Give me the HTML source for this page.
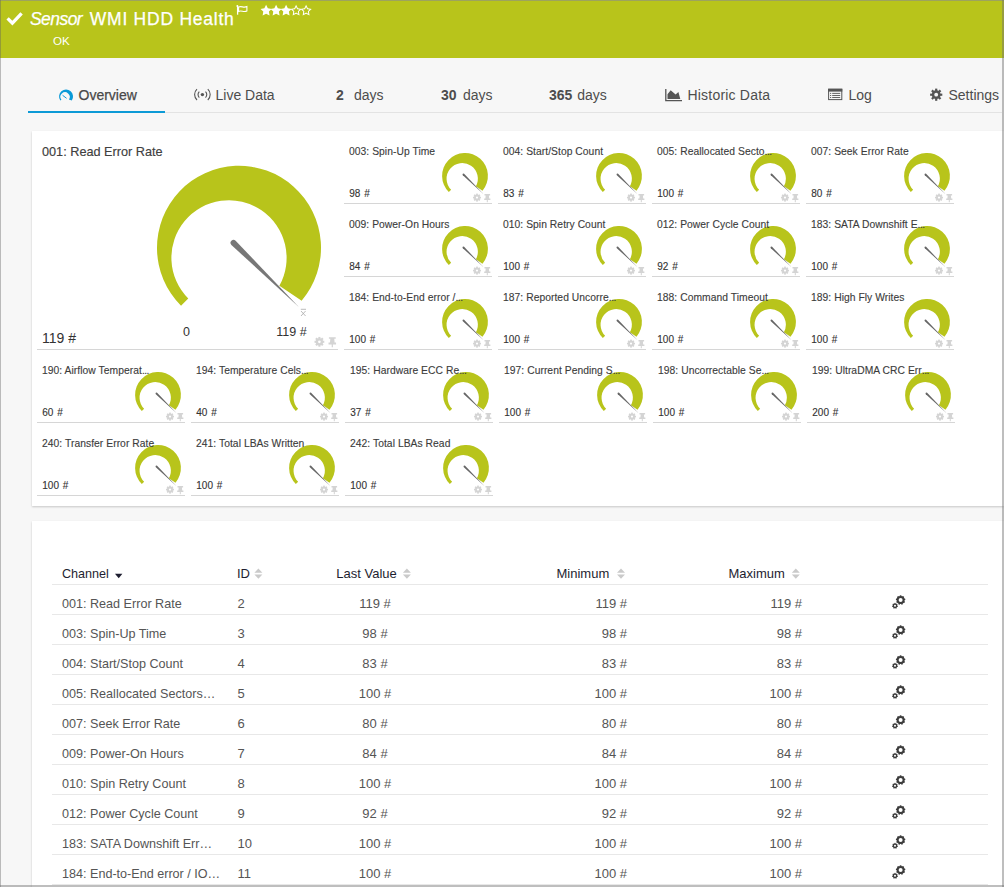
<!DOCTYPE html>
<html><head><meta charset="utf-8">
<style>
*{margin:0;padding:0;box-sizing:border-box}
html,body{width:1004px;height:887px;overflow:hidden}
body{background:#f7f7f7;font-family:"Liberation Sans",sans-serif;position:relative;color:#4a4a4a}
.a{position:absolute;white-space:nowrap}
#hdr{position:absolute;left:0;top:0;width:1004px;height:58px;background:#b8c41b;border-top:1px solid #9da35e}
.panel{position:absolute;background:#fff;box-shadow:0 1px 2px rgba(0,0,0,.2)}
.ln{position:absolute;height:1px;background:#d6d6d6}
.rl{position:absolute;left:52px;width:936px;height:1px;background:#e8e8e8}
svg{position:absolute;left:0;top:0;overflow:visible}
</style></head><body>
<div id="hdr"></div>

<svg width="1004" height="60"><path d="M7.6,18.4 L12.4,23.2 L21.6,13.4" fill="none" stroke="#fff" stroke-width="3.3" stroke-linecap="butt"/></svg>
<div class="a" style="left:30px;top:8.44px;font-size:17.5px;line-height:23px;color:#fff;letter-spacing:-0.55px;-webkit-text-stroke:0.25px #fff"><i>Sensor</i></div>
<div class="a" style="left:89.8px;top:8.44px;font-size:17.5px;line-height:23px;color:#fff;letter-spacing:0.75px;-webkit-text-stroke:0.25px #fff">WMI HDD Health</div>
<div class="a" style="left:53px;top:33.48px;font-size:11.6px;line-height:15px;color:#fff">OK</div>
<svg width="1004" height="60"><path d="M237.6,14.7 V5.6" stroke="#fff" stroke-width="1.3"/><circle cx="237.3" cy="5.9" r="0.9" fill="#fff"/><path d="M238.6,7 C241.5,5.6 243.5,8.2 246.9,6.6 V11 C243.5,12.6 241.5,10 238.6,11.4 Z" fill="none" stroke="#fff" stroke-width="1.1"/></svg>
<svg width="1004" height="60"><polygon points="266.10,4.80 267.83,8.31 271.71,8.88 268.91,11.61 269.57,15.47 266.10,13.65 262.63,15.47 263.29,11.61 260.49,8.88 264.37,8.31" fill="#fff"/><polygon points="276.10,4.80 277.83,8.31 281.71,8.88 278.91,11.61 279.57,15.47 276.10,13.65 272.63,15.47 273.29,11.61 270.49,8.88 274.37,8.31" fill="#fff"/><polygon points="286.10,4.80 287.83,8.31 291.71,8.88 288.91,11.61 289.57,15.47 286.10,13.65 282.63,15.47 283.29,11.61 280.49,8.88 284.37,8.31" fill="#fff"/><path d="M296.10,4.80 L297.83,8.31 L301.71,8.88 L298.91,11.61 L299.57,15.47 L296.10,13.65 L292.63,15.47 L293.29,11.61 L290.49,8.88 L294.37,8.31 Z M296.10,7.00 L297.19,9.20 L299.62,9.56 L297.86,11.27 L298.27,13.69 L296.10,12.55 L293.93,13.69 L294.34,11.27 L292.58,9.56 L295.01,9.20 Z" fill="#fff" fill-rule="evenodd"/><path d="M306.10,4.80 L307.83,8.31 L311.71,8.88 L308.91,11.61 L309.57,15.47 L306.10,13.65 L302.63,15.47 L303.29,11.61 L300.49,8.88 L304.37,8.31 Z M306.10,7.00 L307.19,9.20 L309.62,9.56 L307.86,11.27 L308.27,13.69 L306.10,12.55 L303.93,13.69 L304.34,11.27 L302.58,9.56 L305.01,9.20 Z" fill="#fff" fill-rule="evenodd"/></svg>
<div class="a" style="left:28px;top:111px;width:137px;height:2px;background:#0d9ad6"></div>
<div class="a" style="left:165px;top:112px;width:837px;height:1px;background:#e3e3e3"></div>
<svg width="1004" height="120"><path d="M60.3,100.5 A7,7 0 1 1 71.8,100.5 L68.9,99.6 A4.65,4.65 0 1 0 61.4,99.8 Z" fill="#0a9ad8"/><path d="M62.6,95.3 L66.6,98.3" stroke="#0a9ad8" stroke-width="1.0"/></svg>
<div class="a" style="left:78.5px;top:86.15px;font-size:14px;line-height:18px;color:#484848;-webkit-text-stroke:0.25px #484848">Overview</div>
<svg width="1004" height="120" fill="none" stroke="#555" stroke-width="1.1"><circle cx="202.4" cy="94.6" r="1.7" fill="#555" stroke="none"/><path d="M199.3,91.6 A4.2,4.2 0 0 0 199.3,97.6"/><path d="M205.5,91.6 A4.2,4.2 0 0 1 205.5,97.6"/><path d="M197,89.2 A7.3,7.3 0 0 0 197,100"/><path d="M207.8,89.2 A7.3,7.3 0 0 1 207.8,100"/></svg>
<div class="a" style="left:215.5px;top:86.15px;font-size:14px;line-height:18px;color:#4d4d4d">Live Data</div>
<div class="a" style="left:336px;top:86.15px;font-size:14px;line-height:18px;color:#4d4d4d"><b>2</b></div>
<div class="a" style="left:354px;top:86.15px;font-size:14px;line-height:18px;color:#4d4d4d">days</div>
<div class="a" style="left:441px;top:86.15px;font-size:14px;line-height:18px;color:#4d4d4d"><b>30</b></div>
<div class="a" style="left:463px;top:86.15px;font-size:14px;line-height:18px;color:#4d4d4d">days</div>
<div class="a" style="left:549px;top:86.15px;font-size:14px;line-height:18px;color:#4d4d4d"><b>365</b></div>
<div class="a" style="left:577.3px;top:86.15px;font-size:14px;line-height:18px;color:#4d4d4d">days</div>
<svg width="1004" height="120"><path d="M665.8,89 V100.6 H682" fill="none" stroke="#555" stroke-width="1.3"/><path d="M667.5,98.9 V94.2 L670.7,90.2 L675.6,94.6 L678.4,91.9 L680.3,98.9 Z" fill="#555"/></svg>
<div class="a" style="left:687.5px;top:86.15px;font-size:14px;line-height:18px;color:#4d4d4d;letter-spacing:0.2px">Historic Data</div>
<svg width="1004" height="120"><rect x="828.6" y="89.2" width="13.2" height="10.4" fill="none" stroke="#555" stroke-width="1"/><rect x="828.1" y="88.8" width="14.2" height="2.8" fill="#555"/><path d="M830,93.4 H831.2 M832.2,93.4 H840.2 M830,95.5 H831.2 M832.2,95.5 H840.2 M830,97.5 H831.2 M832.2,97.5 H840.2" stroke="#555" stroke-width="0.9"/></svg>
<div class="a" style="left:848.5px;top:86.15px;font-size:14px;line-height:18px;color:#4d4d4d">Log</div>
<svg width="1004" height="120"><circle cx="936.2" cy="94.7" r="4.4" fill="#555"/><rect x="935.10" y="88.60" width="2.20" height="6.10" fill="#555" transform="rotate(0.0 936.2 94.7)"/><rect x="935.10" y="88.60" width="2.20" height="6.10" fill="#555" transform="rotate(45.0 936.2 94.7)"/><rect x="935.10" y="88.60" width="2.20" height="6.10" fill="#555" transform="rotate(90.0 936.2 94.7)"/><rect x="935.10" y="88.60" width="2.20" height="6.10" fill="#555" transform="rotate(135.0 936.2 94.7)"/><rect x="935.10" y="88.60" width="2.20" height="6.10" fill="#555" transform="rotate(180.0 936.2 94.7)"/><rect x="935.10" y="88.60" width="2.20" height="6.10" fill="#555" transform="rotate(225.0 936.2 94.7)"/><rect x="935.10" y="88.60" width="2.20" height="6.10" fill="#555" transform="rotate(270.0 936.2 94.7)"/><rect x="935.10" y="88.60" width="2.20" height="6.10" fill="#555" transform="rotate(315.0 936.2 94.7)"/><circle cx="936.2" cy="94.7" r="1.9" fill="#f6f6f6"/></svg>
<div class="a" style="left:948.5px;top:86.15px;font-size:14px;line-height:18px;color:#4d4d4d">Settings</div>
<div class="panel" style="left:32px;top:131px;width:972px;height:375px"></div>
<div class="a" style="left:42px;top:143.70px;font-size:12.7px;line-height:17px;color:#404040;-webkit-text-stroke:0.15px #404040">001: Read Error Rate</div>
<svg width="1004" height="887"><path d="M181.02,305.78 A82.00,82.00 0 1 1 301.63,300.73 L279.38,285.73 A57.60,57.60 0 1 0 188.27,298.53 Z" fill="#b8c41b"/><path d="M231.40,244.94 L298.80,307.00 L235.60,240.66 A3.00,3.00 0 0 0 231.40,244.94 Z" fill="#777"/></svg>
<div class="a" style="left:42px;top:329.15px;font-size:14px;line-height:18px;color:#333">119 #</div>
<div class="a" style="left:183px;top:323.67px;font-size:12.5px;line-height:16px;color:#333">0</div>
<div class="a" style="left:276.3px;top:323.67px;font-size:12.5px;line-height:16px;color:#333">119 #</div>
<svg width="1004" height="887"><path d="M300.8,309.3 H306" stroke="#aaa" stroke-width="0.8"/><path d="M301,311 L305.6,316 M305.6,311 L301,316" stroke="#aaa" stroke-width="0.8"/></svg>
<div class="ln" style="left:37px;top:349px;width:301px"></div>
<svg width="1004" height="887"><circle cx="319.4" cy="341.8" r="3.66" fill="#d4d4d4"/><rect x="318.36" y="336.92" width="2.07" height="4.88" fill="#d4d4d4" transform="rotate(0.0 319.4 341.8)"/><rect x="318.36" y="336.92" width="2.07" height="4.88" fill="#d4d4d4" transform="rotate(45.0 319.4 341.8)"/><rect x="318.36" y="336.92" width="2.07" height="4.88" fill="#d4d4d4" transform="rotate(90.0 319.4 341.8)"/><rect x="318.36" y="336.92" width="2.07" height="4.88" fill="#d4d4d4" transform="rotate(135.0 319.4 341.8)"/><rect x="318.36" y="336.92" width="2.07" height="4.88" fill="#d4d4d4" transform="rotate(180.0 319.4 341.8)"/><rect x="318.36" y="336.92" width="2.07" height="4.88" fill="#d4d4d4" transform="rotate(225.0 319.4 341.8)"/><rect x="318.36" y="336.92" width="2.07" height="4.88" fill="#d4d4d4" transform="rotate(270.0 319.4 341.8)"/><rect x="318.36" y="336.92" width="2.07" height="4.88" fill="#d4d4d4" transform="rotate(315.0 319.4 341.8)"/><circle cx="319.4" cy="341.8" r="1.342" fill="#fff"/><polygon points="328.88,337.20 335.72,337.20 335.72,338.79 334.25,338.79 334.62,342.45 336.08,342.45 336.08,344.40 332.91,344.40 332.91,347.20 331.69,347.20 331.69,344.40 328.52,344.40 328.52,342.45 329.98,342.45 330.35,338.79 328.88,338.79" fill="#d4d4d4"/><path d="M448.81,192.09 A22.90,22.90 0 1 1 482.49,190.68 L475.89,186.27 A15.64,15.64 0 1 0 451.15,189.75 Z" fill="#b8c41b"/><path d="M462.83,175.15 L483.37,194.09 L464.10,173.86 A0.90,0.90 0 0 0 462.83,175.15 Z" fill="#666"/><circle cx="477" cy="197.6" r="3.0" fill="#d4d4d4"/><rect x="476.15" y="193.60" width="1.70" height="4.00" fill="#d4d4d4" transform="rotate(0.0 477 197.6)"/><rect x="476.15" y="193.60" width="1.70" height="4.00" fill="#d4d4d4" transform="rotate(45.0 477 197.6)"/><rect x="476.15" y="193.60" width="1.70" height="4.00" fill="#d4d4d4" transform="rotate(90.0 477 197.6)"/><rect x="476.15" y="193.60" width="1.70" height="4.00" fill="#d4d4d4" transform="rotate(135.0 477 197.6)"/><rect x="476.15" y="193.60" width="1.70" height="4.00" fill="#d4d4d4" transform="rotate(180.0 477 197.6)"/><rect x="476.15" y="193.60" width="1.70" height="4.00" fill="#d4d4d4" transform="rotate(225.0 477 197.6)"/><rect x="476.15" y="193.60" width="1.70" height="4.00" fill="#d4d4d4" transform="rotate(270.0 477 197.6)"/><rect x="476.15" y="193.60" width="1.70" height="4.00" fill="#d4d4d4" transform="rotate(315.0 477 197.6)"/><circle cx="477" cy="197.6" r="1.1" fill="#fff"/><polygon points="484.50,194.10 490.10,194.10 490.10,195.40 488.90,195.40 489.20,198.40 490.40,198.40 490.40,200.00 487.80,200.00 487.80,202.30 486.80,202.30 486.80,200.00 484.20,200.00 484.20,198.40 485.40,198.40 485.70,195.40 484.50,195.40" fill="#d4d4d4"/><path d="M602.81,192.09 A22.90,22.90 0 1 1 636.49,190.68 L629.89,186.27 A15.64,15.64 0 1 0 605.15,189.75 Z" fill="#b8c41b"/><path d="M616.83,175.15 L637.37,194.09 L618.10,173.86 A0.90,0.90 0 0 0 616.83,175.15 Z" fill="#666"/><circle cx="631" cy="197.6" r="3.0" fill="#d4d4d4"/><rect x="630.15" y="193.60" width="1.70" height="4.00" fill="#d4d4d4" transform="rotate(0.0 631 197.6)"/><rect x="630.15" y="193.60" width="1.70" height="4.00" fill="#d4d4d4" transform="rotate(45.0 631 197.6)"/><rect x="630.15" y="193.60" width="1.70" height="4.00" fill="#d4d4d4" transform="rotate(90.0 631 197.6)"/><rect x="630.15" y="193.60" width="1.70" height="4.00" fill="#d4d4d4" transform="rotate(135.0 631 197.6)"/><rect x="630.15" y="193.60" width="1.70" height="4.00" fill="#d4d4d4" transform="rotate(180.0 631 197.6)"/><rect x="630.15" y="193.60" width="1.70" height="4.00" fill="#d4d4d4" transform="rotate(225.0 631 197.6)"/><rect x="630.15" y="193.60" width="1.70" height="4.00" fill="#d4d4d4" transform="rotate(270.0 631 197.6)"/><rect x="630.15" y="193.60" width="1.70" height="4.00" fill="#d4d4d4" transform="rotate(315.0 631 197.6)"/><circle cx="631" cy="197.6" r="1.1" fill="#fff"/><polygon points="638.50,194.10 644.10,194.10 644.10,195.40 642.90,195.40 643.20,198.40 644.40,198.40 644.40,200.00 641.80,200.00 641.80,202.30 640.80,202.30 640.80,200.00 638.20,200.00 638.20,198.40 639.40,198.40 639.70,195.40 638.50,195.40" fill="#d4d4d4"/><path d="M756.81,192.09 A22.90,22.90 0 1 1 790.49,190.68 L783.89,186.27 A15.64,15.64 0 1 0 759.15,189.75 Z" fill="#b8c41b"/><path d="M770.83,175.15 L791.37,194.09 L772.10,173.86 A0.90,0.90 0 0 0 770.83,175.15 Z" fill="#666"/><circle cx="785" cy="197.6" r="3.0" fill="#d4d4d4"/><rect x="784.15" y="193.60" width="1.70" height="4.00" fill="#d4d4d4" transform="rotate(0.0 785 197.6)"/><rect x="784.15" y="193.60" width="1.70" height="4.00" fill="#d4d4d4" transform="rotate(45.0 785 197.6)"/><rect x="784.15" y="193.60" width="1.70" height="4.00" fill="#d4d4d4" transform="rotate(90.0 785 197.6)"/><rect x="784.15" y="193.60" width="1.70" height="4.00" fill="#d4d4d4" transform="rotate(135.0 785 197.6)"/><rect x="784.15" y="193.60" width="1.70" height="4.00" fill="#d4d4d4" transform="rotate(180.0 785 197.6)"/><rect x="784.15" y="193.60" width="1.70" height="4.00" fill="#d4d4d4" transform="rotate(225.0 785 197.6)"/><rect x="784.15" y="193.60" width="1.70" height="4.00" fill="#d4d4d4" transform="rotate(270.0 785 197.6)"/><rect x="784.15" y="193.60" width="1.70" height="4.00" fill="#d4d4d4" transform="rotate(315.0 785 197.6)"/><circle cx="785" cy="197.6" r="1.1" fill="#fff"/><polygon points="792.50,194.10 798.10,194.10 798.10,195.40 796.90,195.40 797.20,198.40 798.40,198.40 798.40,200.00 795.80,200.00 795.80,202.30 794.80,202.30 794.80,200.00 792.20,200.00 792.20,198.40 793.40,198.40 793.70,195.40 792.50,195.40" fill="#d4d4d4"/><path d="M910.81,192.09 A22.90,22.90 0 1 1 944.49,190.68 L937.89,186.27 A15.64,15.64 0 1 0 913.15,189.75 Z" fill="#b8c41b"/><path d="M924.83,175.15 L945.37,194.09 L926.10,173.86 A0.90,0.90 0 0 0 924.83,175.15 Z" fill="#666"/><circle cx="939" cy="197.6" r="3.0" fill="#d4d4d4"/><rect x="938.15" y="193.60" width="1.70" height="4.00" fill="#d4d4d4" transform="rotate(0.0 939 197.6)"/><rect x="938.15" y="193.60" width="1.70" height="4.00" fill="#d4d4d4" transform="rotate(45.0 939 197.6)"/><rect x="938.15" y="193.60" width="1.70" height="4.00" fill="#d4d4d4" transform="rotate(90.0 939 197.6)"/><rect x="938.15" y="193.60" width="1.70" height="4.00" fill="#d4d4d4" transform="rotate(135.0 939 197.6)"/><rect x="938.15" y="193.60" width="1.70" height="4.00" fill="#d4d4d4" transform="rotate(180.0 939 197.6)"/><rect x="938.15" y="193.60" width="1.70" height="4.00" fill="#d4d4d4" transform="rotate(225.0 939 197.6)"/><rect x="938.15" y="193.60" width="1.70" height="4.00" fill="#d4d4d4" transform="rotate(270.0 939 197.6)"/><rect x="938.15" y="193.60" width="1.70" height="4.00" fill="#d4d4d4" transform="rotate(315.0 939 197.6)"/><circle cx="939" cy="197.6" r="1.1" fill="#fff"/><polygon points="946.50,194.10 952.10,194.10 952.10,195.40 950.90,195.40 951.20,198.40 952.40,198.40 952.40,200.00 949.80,200.00 949.80,202.30 948.80,202.30 948.80,200.00 946.20,200.00 946.20,198.40 947.40,198.40 947.70,195.40 946.50,195.40" fill="#d4d4d4"/><path d="M448.81,265.09 A22.90,22.90 0 1 1 482.49,263.68 L475.89,259.27 A15.64,15.64 0 1 0 451.15,262.75 Z" fill="#b8c41b"/><path d="M462.83,248.15 L483.37,267.09 L464.10,246.86 A0.90,0.90 0 0 0 462.83,248.15 Z" fill="#666"/><circle cx="477" cy="270.6" r="3.0" fill="#d4d4d4"/><rect x="476.15" y="266.60" width="1.70" height="4.00" fill="#d4d4d4" transform="rotate(0.0 477 270.6)"/><rect x="476.15" y="266.60" width="1.70" height="4.00" fill="#d4d4d4" transform="rotate(45.0 477 270.6)"/><rect x="476.15" y="266.60" width="1.70" height="4.00" fill="#d4d4d4" transform="rotate(90.0 477 270.6)"/><rect x="476.15" y="266.60" width="1.70" height="4.00" fill="#d4d4d4" transform="rotate(135.0 477 270.6)"/><rect x="476.15" y="266.60" width="1.70" height="4.00" fill="#d4d4d4" transform="rotate(180.0 477 270.6)"/><rect x="476.15" y="266.60" width="1.70" height="4.00" fill="#d4d4d4" transform="rotate(225.0 477 270.6)"/><rect x="476.15" y="266.60" width="1.70" height="4.00" fill="#d4d4d4" transform="rotate(270.0 477 270.6)"/><rect x="476.15" y="266.60" width="1.70" height="4.00" fill="#d4d4d4" transform="rotate(315.0 477 270.6)"/><circle cx="477" cy="270.6" r="1.1" fill="#fff"/><polygon points="484.50,267.10 490.10,267.10 490.10,268.40 488.90,268.40 489.20,271.40 490.40,271.40 490.40,273.00 487.80,273.00 487.80,275.30 486.80,275.30 486.80,273.00 484.20,273.00 484.20,271.40 485.40,271.40 485.70,268.40 484.50,268.40" fill="#d4d4d4"/><path d="M602.81,265.09 A22.90,22.90 0 1 1 636.49,263.68 L629.89,259.27 A15.64,15.64 0 1 0 605.15,262.75 Z" fill="#b8c41b"/><path d="M616.83,248.15 L637.37,267.09 L618.10,246.86 A0.90,0.90 0 0 0 616.83,248.15 Z" fill="#666"/><circle cx="631" cy="270.6" r="3.0" fill="#d4d4d4"/><rect x="630.15" y="266.60" width="1.70" height="4.00" fill="#d4d4d4" transform="rotate(0.0 631 270.6)"/><rect x="630.15" y="266.60" width="1.70" height="4.00" fill="#d4d4d4" transform="rotate(45.0 631 270.6)"/><rect x="630.15" y="266.60" width="1.70" height="4.00" fill="#d4d4d4" transform="rotate(90.0 631 270.6)"/><rect x="630.15" y="266.60" width="1.70" height="4.00" fill="#d4d4d4" transform="rotate(135.0 631 270.6)"/><rect x="630.15" y="266.60" width="1.70" height="4.00" fill="#d4d4d4" transform="rotate(180.0 631 270.6)"/><rect x="630.15" y="266.60" width="1.70" height="4.00" fill="#d4d4d4" transform="rotate(225.0 631 270.6)"/><rect x="630.15" y="266.60" width="1.70" height="4.00" fill="#d4d4d4" transform="rotate(270.0 631 270.6)"/><rect x="630.15" y="266.60" width="1.70" height="4.00" fill="#d4d4d4" transform="rotate(315.0 631 270.6)"/><circle cx="631" cy="270.6" r="1.1" fill="#fff"/><polygon points="638.50,267.10 644.10,267.10 644.10,268.40 642.90,268.40 643.20,271.40 644.40,271.40 644.40,273.00 641.80,273.00 641.80,275.30 640.80,275.30 640.80,273.00 638.20,273.00 638.20,271.40 639.40,271.40 639.70,268.40 638.50,268.40" fill="#d4d4d4"/><path d="M756.81,265.09 A22.90,22.90 0 1 1 790.49,263.68 L783.89,259.27 A15.64,15.64 0 1 0 759.15,262.75 Z" fill="#b8c41b"/><path d="M770.83,248.15 L791.37,267.09 L772.10,246.86 A0.90,0.90 0 0 0 770.83,248.15 Z" fill="#666"/><circle cx="785" cy="270.6" r="3.0" fill="#d4d4d4"/><rect x="784.15" y="266.60" width="1.70" height="4.00" fill="#d4d4d4" transform="rotate(0.0 785 270.6)"/><rect x="784.15" y="266.60" width="1.70" height="4.00" fill="#d4d4d4" transform="rotate(45.0 785 270.6)"/><rect x="784.15" y="266.60" width="1.70" height="4.00" fill="#d4d4d4" transform="rotate(90.0 785 270.6)"/><rect x="784.15" y="266.60" width="1.70" height="4.00" fill="#d4d4d4" transform="rotate(135.0 785 270.6)"/><rect x="784.15" y="266.60" width="1.70" height="4.00" fill="#d4d4d4" transform="rotate(180.0 785 270.6)"/><rect x="784.15" y="266.60" width="1.70" height="4.00" fill="#d4d4d4" transform="rotate(225.0 785 270.6)"/><rect x="784.15" y="266.60" width="1.70" height="4.00" fill="#d4d4d4" transform="rotate(270.0 785 270.6)"/><rect x="784.15" y="266.60" width="1.70" height="4.00" fill="#d4d4d4" transform="rotate(315.0 785 270.6)"/><circle cx="785" cy="270.6" r="1.1" fill="#fff"/><polygon points="792.50,267.10 798.10,267.10 798.10,268.40 796.90,268.40 797.20,271.40 798.40,271.40 798.40,273.00 795.80,273.00 795.80,275.30 794.80,275.30 794.80,273.00 792.20,273.00 792.20,271.40 793.40,271.40 793.70,268.40 792.50,268.40" fill="#d4d4d4"/><path d="M910.81,265.09 A22.90,22.90 0 1 1 944.49,263.68 L937.89,259.27 A15.64,15.64 0 1 0 913.15,262.75 Z" fill="#b8c41b"/><path d="M924.83,248.15 L945.37,267.09 L926.10,246.86 A0.90,0.90 0 0 0 924.83,248.15 Z" fill="#666"/><circle cx="939" cy="270.6" r="3.0" fill="#d4d4d4"/><rect x="938.15" y="266.60" width="1.70" height="4.00" fill="#d4d4d4" transform="rotate(0.0 939 270.6)"/><rect x="938.15" y="266.60" width="1.70" height="4.00" fill="#d4d4d4" transform="rotate(45.0 939 270.6)"/><rect x="938.15" y="266.60" width="1.70" height="4.00" fill="#d4d4d4" transform="rotate(90.0 939 270.6)"/><rect x="938.15" y="266.60" width="1.70" height="4.00" fill="#d4d4d4" transform="rotate(135.0 939 270.6)"/><rect x="938.15" y="266.60" width="1.70" height="4.00" fill="#d4d4d4" transform="rotate(180.0 939 270.6)"/><rect x="938.15" y="266.60" width="1.70" height="4.00" fill="#d4d4d4" transform="rotate(225.0 939 270.6)"/><rect x="938.15" y="266.60" width="1.70" height="4.00" fill="#d4d4d4" transform="rotate(270.0 939 270.6)"/><rect x="938.15" y="266.60" width="1.70" height="4.00" fill="#d4d4d4" transform="rotate(315.0 939 270.6)"/><circle cx="939" cy="270.6" r="1.1" fill="#fff"/><polygon points="946.50,267.10 952.10,267.10 952.10,268.40 950.90,268.40 951.20,271.40 952.40,271.40 952.40,273.00 949.80,273.00 949.80,275.30 948.80,275.30 948.80,273.00 946.20,273.00 946.20,271.40 947.40,271.40 947.70,268.40 946.50,268.40" fill="#d4d4d4"/><path d="M448.81,338.09 A22.90,22.90 0 1 1 482.49,336.68 L475.89,332.27 A15.64,15.64 0 1 0 451.15,335.75 Z" fill="#b8c41b"/><path d="M462.83,321.15 L483.37,340.09 L464.10,319.86 A0.90,0.90 0 0 0 462.83,321.15 Z" fill="#666"/><circle cx="477" cy="343.6" r="3.0" fill="#d4d4d4"/><rect x="476.15" y="339.60" width="1.70" height="4.00" fill="#d4d4d4" transform="rotate(0.0 477 343.6)"/><rect x="476.15" y="339.60" width="1.70" height="4.00" fill="#d4d4d4" transform="rotate(45.0 477 343.6)"/><rect x="476.15" y="339.60" width="1.70" height="4.00" fill="#d4d4d4" transform="rotate(90.0 477 343.6)"/><rect x="476.15" y="339.60" width="1.70" height="4.00" fill="#d4d4d4" transform="rotate(135.0 477 343.6)"/><rect x="476.15" y="339.60" width="1.70" height="4.00" fill="#d4d4d4" transform="rotate(180.0 477 343.6)"/><rect x="476.15" y="339.60" width="1.70" height="4.00" fill="#d4d4d4" transform="rotate(225.0 477 343.6)"/><rect x="476.15" y="339.60" width="1.70" height="4.00" fill="#d4d4d4" transform="rotate(270.0 477 343.6)"/><rect x="476.15" y="339.60" width="1.70" height="4.00" fill="#d4d4d4" transform="rotate(315.0 477 343.6)"/><circle cx="477" cy="343.6" r="1.1" fill="#fff"/><polygon points="484.50,340.10 490.10,340.10 490.10,341.40 488.90,341.40 489.20,344.40 490.40,344.40 490.40,346.00 487.80,346.00 487.80,348.30 486.80,348.30 486.80,346.00 484.20,346.00 484.20,344.40 485.40,344.40 485.70,341.40 484.50,341.40" fill="#d4d4d4"/><path d="M602.81,338.09 A22.90,22.90 0 1 1 636.49,336.68 L629.89,332.27 A15.64,15.64 0 1 0 605.15,335.75 Z" fill="#b8c41b"/><path d="M616.83,321.15 L637.37,340.09 L618.10,319.86 A0.90,0.90 0 0 0 616.83,321.15 Z" fill="#666"/><circle cx="631" cy="343.6" r="3.0" fill="#d4d4d4"/><rect x="630.15" y="339.60" width="1.70" height="4.00" fill="#d4d4d4" transform="rotate(0.0 631 343.6)"/><rect x="630.15" y="339.60" width="1.70" height="4.00" fill="#d4d4d4" transform="rotate(45.0 631 343.6)"/><rect x="630.15" y="339.60" width="1.70" height="4.00" fill="#d4d4d4" transform="rotate(90.0 631 343.6)"/><rect x="630.15" y="339.60" width="1.70" height="4.00" fill="#d4d4d4" transform="rotate(135.0 631 343.6)"/><rect x="630.15" y="339.60" width="1.70" height="4.00" fill="#d4d4d4" transform="rotate(180.0 631 343.6)"/><rect x="630.15" y="339.60" width="1.70" height="4.00" fill="#d4d4d4" transform="rotate(225.0 631 343.6)"/><rect x="630.15" y="339.60" width="1.70" height="4.00" fill="#d4d4d4" transform="rotate(270.0 631 343.6)"/><rect x="630.15" y="339.60" width="1.70" height="4.00" fill="#d4d4d4" transform="rotate(315.0 631 343.6)"/><circle cx="631" cy="343.6" r="1.1" fill="#fff"/><polygon points="638.50,340.10 644.10,340.10 644.10,341.40 642.90,341.40 643.20,344.40 644.40,344.40 644.40,346.00 641.80,346.00 641.80,348.30 640.80,348.30 640.80,346.00 638.20,346.00 638.20,344.40 639.40,344.40 639.70,341.40 638.50,341.40" fill="#d4d4d4"/><path d="M756.81,338.09 A22.90,22.90 0 1 1 790.49,336.68 L783.89,332.27 A15.64,15.64 0 1 0 759.15,335.75 Z" fill="#b8c41b"/><path d="M770.83,321.15 L791.37,340.09 L772.10,319.86 A0.90,0.90 0 0 0 770.83,321.15 Z" fill="#666"/><circle cx="785" cy="343.6" r="3.0" fill="#d4d4d4"/><rect x="784.15" y="339.60" width="1.70" height="4.00" fill="#d4d4d4" transform="rotate(0.0 785 343.6)"/><rect x="784.15" y="339.60" width="1.70" height="4.00" fill="#d4d4d4" transform="rotate(45.0 785 343.6)"/><rect x="784.15" y="339.60" width="1.70" height="4.00" fill="#d4d4d4" transform="rotate(90.0 785 343.6)"/><rect x="784.15" y="339.60" width="1.70" height="4.00" fill="#d4d4d4" transform="rotate(135.0 785 343.6)"/><rect x="784.15" y="339.60" width="1.70" height="4.00" fill="#d4d4d4" transform="rotate(180.0 785 343.6)"/><rect x="784.15" y="339.60" width="1.70" height="4.00" fill="#d4d4d4" transform="rotate(225.0 785 343.6)"/><rect x="784.15" y="339.60" width="1.70" height="4.00" fill="#d4d4d4" transform="rotate(270.0 785 343.6)"/><rect x="784.15" y="339.60" width="1.70" height="4.00" fill="#d4d4d4" transform="rotate(315.0 785 343.6)"/><circle cx="785" cy="343.6" r="1.1" fill="#fff"/><polygon points="792.50,340.10 798.10,340.10 798.10,341.40 796.90,341.40 797.20,344.40 798.40,344.40 798.40,346.00 795.80,346.00 795.80,348.30 794.80,348.30 794.80,346.00 792.20,346.00 792.20,344.40 793.40,344.40 793.70,341.40 792.50,341.40" fill="#d4d4d4"/><path d="M910.81,338.09 A22.90,22.90 0 1 1 944.49,336.68 L937.89,332.27 A15.64,15.64 0 1 0 913.15,335.75 Z" fill="#b8c41b"/><path d="M924.83,321.15 L945.37,340.09 L926.10,319.86 A0.90,0.90 0 0 0 924.83,321.15 Z" fill="#666"/><circle cx="939" cy="343.6" r="3.0" fill="#d4d4d4"/><rect x="938.15" y="339.60" width="1.70" height="4.00" fill="#d4d4d4" transform="rotate(0.0 939 343.6)"/><rect x="938.15" y="339.60" width="1.70" height="4.00" fill="#d4d4d4" transform="rotate(45.0 939 343.6)"/><rect x="938.15" y="339.60" width="1.70" height="4.00" fill="#d4d4d4" transform="rotate(90.0 939 343.6)"/><rect x="938.15" y="339.60" width="1.70" height="4.00" fill="#d4d4d4" transform="rotate(135.0 939 343.6)"/><rect x="938.15" y="339.60" width="1.70" height="4.00" fill="#d4d4d4" transform="rotate(180.0 939 343.6)"/><rect x="938.15" y="339.60" width="1.70" height="4.00" fill="#d4d4d4" transform="rotate(225.0 939 343.6)"/><rect x="938.15" y="339.60" width="1.70" height="4.00" fill="#d4d4d4" transform="rotate(270.0 939 343.6)"/><rect x="938.15" y="339.60" width="1.70" height="4.00" fill="#d4d4d4" transform="rotate(315.0 939 343.6)"/><circle cx="939" cy="343.6" r="1.1" fill="#fff"/><polygon points="946.50,340.10 952.10,340.10 952.10,341.40 950.90,341.40 951.20,344.40 952.40,344.40 952.40,346.00 949.80,346.00 949.80,348.30 948.80,348.30 948.80,346.00 946.20,346.00 946.20,344.40 947.40,344.40 947.70,341.40 946.50,341.40" fill="#d4d4d4"/><path d="M141.81,411.09 A22.90,22.90 0 1 1 175.49,409.68 L168.89,405.27 A15.64,15.64 0 1 0 144.15,408.75 Z" fill="#b8c41b"/><path d="M155.83,394.15 L176.37,413.09 L157.10,392.86 A0.90,0.90 0 0 0 155.83,394.15 Z" fill="#666"/><circle cx="170" cy="416.6" r="3.0" fill="#d4d4d4"/><rect x="169.15" y="412.60" width="1.70" height="4.00" fill="#d4d4d4" transform="rotate(0.0 170 416.6)"/><rect x="169.15" y="412.60" width="1.70" height="4.00" fill="#d4d4d4" transform="rotate(45.0 170 416.6)"/><rect x="169.15" y="412.60" width="1.70" height="4.00" fill="#d4d4d4" transform="rotate(90.0 170 416.6)"/><rect x="169.15" y="412.60" width="1.70" height="4.00" fill="#d4d4d4" transform="rotate(135.0 170 416.6)"/><rect x="169.15" y="412.60" width="1.70" height="4.00" fill="#d4d4d4" transform="rotate(180.0 170 416.6)"/><rect x="169.15" y="412.60" width="1.70" height="4.00" fill="#d4d4d4" transform="rotate(225.0 170 416.6)"/><rect x="169.15" y="412.60" width="1.70" height="4.00" fill="#d4d4d4" transform="rotate(270.0 170 416.6)"/><rect x="169.15" y="412.60" width="1.70" height="4.00" fill="#d4d4d4" transform="rotate(315.0 170 416.6)"/><circle cx="170" cy="416.6" r="1.1" fill="#fff"/><polygon points="177.50,413.10 183.10,413.10 183.10,414.40 181.90,414.40 182.20,417.40 183.40,417.40 183.40,419.00 180.80,419.00 180.80,421.30 179.80,421.30 179.80,419.00 177.20,419.00 177.20,417.40 178.40,417.40 178.70,414.40 177.50,414.40" fill="#d4d4d4"/><path d="M295.81,411.09 A22.90,22.90 0 1 1 329.49,409.68 L322.89,405.27 A15.64,15.64 0 1 0 298.15,408.75 Z" fill="#b8c41b"/><path d="M309.83,394.15 L330.37,413.09 L311.10,392.86 A0.90,0.90 0 0 0 309.83,394.15 Z" fill="#666"/><circle cx="324" cy="416.6" r="3.0" fill="#d4d4d4"/><rect x="323.15" y="412.60" width="1.70" height="4.00" fill="#d4d4d4" transform="rotate(0.0 324 416.6)"/><rect x="323.15" y="412.60" width="1.70" height="4.00" fill="#d4d4d4" transform="rotate(45.0 324 416.6)"/><rect x="323.15" y="412.60" width="1.70" height="4.00" fill="#d4d4d4" transform="rotate(90.0 324 416.6)"/><rect x="323.15" y="412.60" width="1.70" height="4.00" fill="#d4d4d4" transform="rotate(135.0 324 416.6)"/><rect x="323.15" y="412.60" width="1.70" height="4.00" fill="#d4d4d4" transform="rotate(180.0 324 416.6)"/><rect x="323.15" y="412.60" width="1.70" height="4.00" fill="#d4d4d4" transform="rotate(225.0 324 416.6)"/><rect x="323.15" y="412.60" width="1.70" height="4.00" fill="#d4d4d4" transform="rotate(270.0 324 416.6)"/><rect x="323.15" y="412.60" width="1.70" height="4.00" fill="#d4d4d4" transform="rotate(315.0 324 416.6)"/><circle cx="324" cy="416.6" r="1.1" fill="#fff"/><polygon points="331.50,413.10 337.10,413.10 337.10,414.40 335.90,414.40 336.20,417.40 337.40,417.40 337.40,419.00 334.80,419.00 334.80,421.30 333.80,421.30 333.80,419.00 331.20,419.00 331.20,417.40 332.40,417.40 332.70,414.40 331.50,414.40" fill="#d4d4d4"/><path d="M449.81,411.09 A22.90,22.90 0 1 1 483.49,409.68 L476.89,405.27 A15.64,15.64 0 1 0 452.15,408.75 Z" fill="#b8c41b"/><path d="M463.83,394.15 L484.37,413.09 L465.10,392.86 A0.90,0.90 0 0 0 463.83,394.15 Z" fill="#666"/><circle cx="478" cy="416.6" r="3.0" fill="#d4d4d4"/><rect x="477.15" y="412.60" width="1.70" height="4.00" fill="#d4d4d4" transform="rotate(0.0 478 416.6)"/><rect x="477.15" y="412.60" width="1.70" height="4.00" fill="#d4d4d4" transform="rotate(45.0 478 416.6)"/><rect x="477.15" y="412.60" width="1.70" height="4.00" fill="#d4d4d4" transform="rotate(90.0 478 416.6)"/><rect x="477.15" y="412.60" width="1.70" height="4.00" fill="#d4d4d4" transform="rotate(135.0 478 416.6)"/><rect x="477.15" y="412.60" width="1.70" height="4.00" fill="#d4d4d4" transform="rotate(180.0 478 416.6)"/><rect x="477.15" y="412.60" width="1.70" height="4.00" fill="#d4d4d4" transform="rotate(225.0 478 416.6)"/><rect x="477.15" y="412.60" width="1.70" height="4.00" fill="#d4d4d4" transform="rotate(270.0 478 416.6)"/><rect x="477.15" y="412.60" width="1.70" height="4.00" fill="#d4d4d4" transform="rotate(315.0 478 416.6)"/><circle cx="478" cy="416.6" r="1.1" fill="#fff"/><polygon points="485.50,413.10 491.10,413.10 491.10,414.40 489.90,414.40 490.20,417.40 491.40,417.40 491.40,419.00 488.80,419.00 488.80,421.30 487.80,421.30 487.80,419.00 485.20,419.00 485.20,417.40 486.40,417.40 486.70,414.40 485.50,414.40" fill="#d4d4d4"/><path d="M603.81,411.09 A22.90,22.90 0 1 1 637.49,409.68 L630.89,405.27 A15.64,15.64 0 1 0 606.15,408.75 Z" fill="#b8c41b"/><path d="M617.83,394.15 L638.37,413.09 L619.10,392.86 A0.90,0.90 0 0 0 617.83,394.15 Z" fill="#666"/><circle cx="632" cy="416.6" r="3.0" fill="#d4d4d4"/><rect x="631.15" y="412.60" width="1.70" height="4.00" fill="#d4d4d4" transform="rotate(0.0 632 416.6)"/><rect x="631.15" y="412.60" width="1.70" height="4.00" fill="#d4d4d4" transform="rotate(45.0 632 416.6)"/><rect x="631.15" y="412.60" width="1.70" height="4.00" fill="#d4d4d4" transform="rotate(90.0 632 416.6)"/><rect x="631.15" y="412.60" width="1.70" height="4.00" fill="#d4d4d4" transform="rotate(135.0 632 416.6)"/><rect x="631.15" y="412.60" width="1.70" height="4.00" fill="#d4d4d4" transform="rotate(180.0 632 416.6)"/><rect x="631.15" y="412.60" width="1.70" height="4.00" fill="#d4d4d4" transform="rotate(225.0 632 416.6)"/><rect x="631.15" y="412.60" width="1.70" height="4.00" fill="#d4d4d4" transform="rotate(270.0 632 416.6)"/><rect x="631.15" y="412.60" width="1.70" height="4.00" fill="#d4d4d4" transform="rotate(315.0 632 416.6)"/><circle cx="632" cy="416.6" r="1.1" fill="#fff"/><polygon points="639.50,413.10 645.10,413.10 645.10,414.40 643.90,414.40 644.20,417.40 645.40,417.40 645.40,419.00 642.80,419.00 642.80,421.30 641.80,421.30 641.80,419.00 639.20,419.00 639.20,417.40 640.40,417.40 640.70,414.40 639.50,414.40" fill="#d4d4d4"/><path d="M757.81,411.09 A22.90,22.90 0 1 1 791.49,409.68 L784.89,405.27 A15.64,15.64 0 1 0 760.15,408.75 Z" fill="#b8c41b"/><path d="M771.83,394.15 L792.37,413.09 L773.10,392.86 A0.90,0.90 0 0 0 771.83,394.15 Z" fill="#666"/><circle cx="786" cy="416.6" r="3.0" fill="#d4d4d4"/><rect x="785.15" y="412.60" width="1.70" height="4.00" fill="#d4d4d4" transform="rotate(0.0 786 416.6)"/><rect x="785.15" y="412.60" width="1.70" height="4.00" fill="#d4d4d4" transform="rotate(45.0 786 416.6)"/><rect x="785.15" y="412.60" width="1.70" height="4.00" fill="#d4d4d4" transform="rotate(90.0 786 416.6)"/><rect x="785.15" y="412.60" width="1.70" height="4.00" fill="#d4d4d4" transform="rotate(135.0 786 416.6)"/><rect x="785.15" y="412.60" width="1.70" height="4.00" fill="#d4d4d4" transform="rotate(180.0 786 416.6)"/><rect x="785.15" y="412.60" width="1.70" height="4.00" fill="#d4d4d4" transform="rotate(225.0 786 416.6)"/><rect x="785.15" y="412.60" width="1.70" height="4.00" fill="#d4d4d4" transform="rotate(270.0 786 416.6)"/><rect x="785.15" y="412.60" width="1.70" height="4.00" fill="#d4d4d4" transform="rotate(315.0 786 416.6)"/><circle cx="786" cy="416.6" r="1.1" fill="#fff"/><polygon points="793.50,413.10 799.10,413.10 799.10,414.40 797.90,414.40 798.20,417.40 799.40,417.40 799.40,419.00 796.80,419.00 796.80,421.30 795.80,421.30 795.80,419.00 793.20,419.00 793.20,417.40 794.40,417.40 794.70,414.40 793.50,414.40" fill="#d4d4d4"/><path d="M911.81,411.09 A22.90,22.90 0 1 1 945.49,409.68 L938.89,405.27 A15.64,15.64 0 1 0 914.15,408.75 Z" fill="#b8c41b"/><path d="M925.83,394.15 L946.37,413.09 L927.10,392.86 A0.90,0.90 0 0 0 925.83,394.15 Z" fill="#666"/><circle cx="940" cy="416.6" r="3.0" fill="#d4d4d4"/><rect x="939.15" y="412.60" width="1.70" height="4.00" fill="#d4d4d4" transform="rotate(0.0 940 416.6)"/><rect x="939.15" y="412.60" width="1.70" height="4.00" fill="#d4d4d4" transform="rotate(45.0 940 416.6)"/><rect x="939.15" y="412.60" width="1.70" height="4.00" fill="#d4d4d4" transform="rotate(90.0 940 416.6)"/><rect x="939.15" y="412.60" width="1.70" height="4.00" fill="#d4d4d4" transform="rotate(135.0 940 416.6)"/><rect x="939.15" y="412.60" width="1.70" height="4.00" fill="#d4d4d4" transform="rotate(180.0 940 416.6)"/><rect x="939.15" y="412.60" width="1.70" height="4.00" fill="#d4d4d4" transform="rotate(225.0 940 416.6)"/><rect x="939.15" y="412.60" width="1.70" height="4.00" fill="#d4d4d4" transform="rotate(270.0 940 416.6)"/><rect x="939.15" y="412.60" width="1.70" height="4.00" fill="#d4d4d4" transform="rotate(315.0 940 416.6)"/><circle cx="940" cy="416.6" r="1.1" fill="#fff"/><polygon points="947.50,413.10 953.10,413.10 953.10,414.40 951.90,414.40 952.20,417.40 953.40,417.40 953.40,419.00 950.80,419.00 950.80,421.30 949.80,421.30 949.80,419.00 947.20,419.00 947.20,417.40 948.40,417.40 948.70,414.40 947.50,414.40" fill="#d4d4d4"/><path d="M141.81,484.09 A22.90,22.90 0 1 1 175.49,482.68 L168.89,478.27 A15.64,15.64 0 1 0 144.15,481.75 Z" fill="#b8c41b"/><path d="M155.83,467.15 L176.37,486.09 L157.10,465.86 A0.90,0.90 0 0 0 155.83,467.15 Z" fill="#666"/><circle cx="170" cy="489.6" r="3.0" fill="#d4d4d4"/><rect x="169.15" y="485.60" width="1.70" height="4.00" fill="#d4d4d4" transform="rotate(0.0 170 489.6)"/><rect x="169.15" y="485.60" width="1.70" height="4.00" fill="#d4d4d4" transform="rotate(45.0 170 489.6)"/><rect x="169.15" y="485.60" width="1.70" height="4.00" fill="#d4d4d4" transform="rotate(90.0 170 489.6)"/><rect x="169.15" y="485.60" width="1.70" height="4.00" fill="#d4d4d4" transform="rotate(135.0 170 489.6)"/><rect x="169.15" y="485.60" width="1.70" height="4.00" fill="#d4d4d4" transform="rotate(180.0 170 489.6)"/><rect x="169.15" y="485.60" width="1.70" height="4.00" fill="#d4d4d4" transform="rotate(225.0 170 489.6)"/><rect x="169.15" y="485.60" width="1.70" height="4.00" fill="#d4d4d4" transform="rotate(270.0 170 489.6)"/><rect x="169.15" y="485.60" width="1.70" height="4.00" fill="#d4d4d4" transform="rotate(315.0 170 489.6)"/><circle cx="170" cy="489.6" r="1.1" fill="#fff"/><polygon points="177.50,486.10 183.10,486.10 183.10,487.40 181.90,487.40 182.20,490.40 183.40,490.40 183.40,492.00 180.80,492.00 180.80,494.30 179.80,494.30 179.80,492.00 177.20,492.00 177.20,490.40 178.40,490.40 178.70,487.40 177.50,487.40" fill="#d4d4d4"/><path d="M295.81,484.09 A22.90,22.90 0 1 1 329.49,482.68 L322.89,478.27 A15.64,15.64 0 1 0 298.15,481.75 Z" fill="#b8c41b"/><path d="M309.83,467.15 L330.37,486.09 L311.10,465.86 A0.90,0.90 0 0 0 309.83,467.15 Z" fill="#666"/><circle cx="324" cy="489.6" r="3.0" fill="#d4d4d4"/><rect x="323.15" y="485.60" width="1.70" height="4.00" fill="#d4d4d4" transform="rotate(0.0 324 489.6)"/><rect x="323.15" y="485.60" width="1.70" height="4.00" fill="#d4d4d4" transform="rotate(45.0 324 489.6)"/><rect x="323.15" y="485.60" width="1.70" height="4.00" fill="#d4d4d4" transform="rotate(90.0 324 489.6)"/><rect x="323.15" y="485.60" width="1.70" height="4.00" fill="#d4d4d4" transform="rotate(135.0 324 489.6)"/><rect x="323.15" y="485.60" width="1.70" height="4.00" fill="#d4d4d4" transform="rotate(180.0 324 489.6)"/><rect x="323.15" y="485.60" width="1.70" height="4.00" fill="#d4d4d4" transform="rotate(225.0 324 489.6)"/><rect x="323.15" y="485.60" width="1.70" height="4.00" fill="#d4d4d4" transform="rotate(270.0 324 489.6)"/><rect x="323.15" y="485.60" width="1.70" height="4.00" fill="#d4d4d4" transform="rotate(315.0 324 489.6)"/><circle cx="324" cy="489.6" r="1.1" fill="#fff"/><polygon points="331.50,486.10 337.10,486.10 337.10,487.40 335.90,487.40 336.20,490.40 337.40,490.40 337.40,492.00 334.80,492.00 334.80,494.30 333.80,494.30 333.80,492.00 331.20,492.00 331.20,490.40 332.40,490.40 332.70,487.40 331.50,487.40" fill="#d4d4d4"/><path d="M449.81,484.09 A22.90,22.90 0 1 1 483.49,482.68 L476.89,478.27 A15.64,15.64 0 1 0 452.15,481.75 Z" fill="#b8c41b"/><path d="M463.83,467.15 L484.37,486.09 L465.10,465.86 A0.90,0.90 0 0 0 463.83,467.15 Z" fill="#666"/><circle cx="478" cy="489.6" r="3.0" fill="#d4d4d4"/><rect x="477.15" y="485.60" width="1.70" height="4.00" fill="#d4d4d4" transform="rotate(0.0 478 489.6)"/><rect x="477.15" y="485.60" width="1.70" height="4.00" fill="#d4d4d4" transform="rotate(45.0 478 489.6)"/><rect x="477.15" y="485.60" width="1.70" height="4.00" fill="#d4d4d4" transform="rotate(90.0 478 489.6)"/><rect x="477.15" y="485.60" width="1.70" height="4.00" fill="#d4d4d4" transform="rotate(135.0 478 489.6)"/><rect x="477.15" y="485.60" width="1.70" height="4.00" fill="#d4d4d4" transform="rotate(180.0 478 489.6)"/><rect x="477.15" y="485.60" width="1.70" height="4.00" fill="#d4d4d4" transform="rotate(225.0 478 489.6)"/><rect x="477.15" y="485.60" width="1.70" height="4.00" fill="#d4d4d4" transform="rotate(270.0 478 489.6)"/><rect x="477.15" y="485.60" width="1.70" height="4.00" fill="#d4d4d4" transform="rotate(315.0 478 489.6)"/><circle cx="478" cy="489.6" r="1.1" fill="#fff"/><polygon points="485.50,486.10 491.10,486.10 491.10,487.40 489.90,487.40 490.20,490.40 491.40,490.40 491.40,492.00 488.80,492.00 488.80,494.30 487.80,494.30 487.80,492.00 485.20,492.00 485.20,490.40 486.40,490.40 486.70,487.40 485.50,487.40" fill="#d4d4d4"/></svg>
<div class="a" style="left:349px;top:145.13px;font-size:10.3px;line-height:13px;color:#3c3c3c;letter-spacing:0.05px;-webkit-text-stroke:0.12px #3c3c3c">003: Spin-Up Time</div>
<div class="a" style="left:349.3px;top:187.23px;font-size:10px;line-height:13px;color:#333;word-spacing:1px;-webkit-text-stroke:0.12px #333">98 #</div>
<div class="ln" style="left:344px;top:203px;width:148px"></div>
<div class="a" style="left:503px;top:145.13px;font-size:10.3px;line-height:13px;color:#3c3c3c;letter-spacing:0.05px;-webkit-text-stroke:0.12px #3c3c3c">004: Start/Stop Count</div>
<div class="a" style="left:503.3px;top:187.23px;font-size:10px;line-height:13px;color:#333;word-spacing:1px;-webkit-text-stroke:0.12px #333">83 #</div>
<div class="ln" style="left:498px;top:203px;width:148px"></div>
<div class="a" style="left:657px;top:145.13px;font-size:10.3px;line-height:13px;color:#3c3c3c;letter-spacing:0.05px;-webkit-text-stroke:0.12px #3c3c3c">005: Reallocated Secto<span style="letter-spacing:-0.5px">...</span></div>
<div class="a" style="left:657.3px;top:187.23px;font-size:10px;line-height:13px;color:#333;word-spacing:1px;-webkit-text-stroke:0.12px #333">100 #</div>
<div class="ln" style="left:652px;top:203px;width:148px"></div>
<div class="a" style="left:811px;top:145.13px;font-size:10.3px;line-height:13px;color:#3c3c3c;letter-spacing:0.05px;-webkit-text-stroke:0.12px #3c3c3c">007: Seek Error Rate</div>
<div class="a" style="left:811.3px;top:187.23px;font-size:10px;line-height:13px;color:#333;word-spacing:1px;-webkit-text-stroke:0.12px #333">80 #</div>
<div class="ln" style="left:806px;top:203px;width:148px"></div>
<div class="a" style="left:349px;top:218.13px;font-size:10.3px;line-height:13px;color:#3c3c3c;letter-spacing:0.05px;-webkit-text-stroke:0.12px #3c3c3c">009: Power-On Hours</div>
<div class="a" style="left:349.3px;top:260.24px;font-size:10px;line-height:13px;color:#333;word-spacing:1px;-webkit-text-stroke:0.12px #333">84 #</div>
<div class="ln" style="left:344px;top:276px;width:148px"></div>
<div class="a" style="left:503px;top:218.13px;font-size:10.3px;line-height:13px;color:#3c3c3c;letter-spacing:0.05px;-webkit-text-stroke:0.12px #3c3c3c">010: Spin Retry Count</div>
<div class="a" style="left:503.3px;top:260.24px;font-size:10px;line-height:13px;color:#333;word-spacing:1px;-webkit-text-stroke:0.12px #333">100 #</div>
<div class="ln" style="left:498px;top:276px;width:148px"></div>
<div class="a" style="left:657px;top:218.13px;font-size:10.3px;line-height:13px;color:#3c3c3c;letter-spacing:0.05px;-webkit-text-stroke:0.12px #3c3c3c">012: Power Cycle Count</div>
<div class="a" style="left:657.3px;top:260.24px;font-size:10px;line-height:13px;color:#333;word-spacing:1px;-webkit-text-stroke:0.12px #333">92 #</div>
<div class="ln" style="left:652px;top:276px;width:148px"></div>
<div class="a" style="left:811px;top:218.13px;font-size:10.3px;line-height:13px;color:#3c3c3c;letter-spacing:0.05px;-webkit-text-stroke:0.12px #3c3c3c">183: SATA Downshift E<span style="letter-spacing:-0.5px">...</span></div>
<div class="a" style="left:811.3px;top:260.24px;font-size:10px;line-height:13px;color:#333;word-spacing:1px;-webkit-text-stroke:0.12px #333">100 #</div>
<div class="ln" style="left:806px;top:276px;width:148px"></div>
<div class="a" style="left:349px;top:291.13px;font-size:10.3px;line-height:13px;color:#3c3c3c;letter-spacing:0.05px;-webkit-text-stroke:0.12px #3c3c3c">184: End-to-End error /<span style="letter-spacing:-0.5px">...</span></div>
<div class="a" style="left:349.3px;top:333.24px;font-size:10px;line-height:13px;color:#333;word-spacing:1px;-webkit-text-stroke:0.12px #333">100 #</div>
<div class="ln" style="left:344px;top:349px;width:148px"></div>
<div class="a" style="left:503px;top:291.13px;font-size:10.3px;line-height:13px;color:#3c3c3c;letter-spacing:0.05px;-webkit-text-stroke:0.12px #3c3c3c">187: Reported Uncorre<span style="letter-spacing:-0.5px">...</span></div>
<div class="a" style="left:503.3px;top:333.24px;font-size:10px;line-height:13px;color:#333;word-spacing:1px;-webkit-text-stroke:0.12px #333">100 #</div>
<div class="ln" style="left:498px;top:349px;width:148px"></div>
<div class="a" style="left:657px;top:291.13px;font-size:10.3px;line-height:13px;color:#3c3c3c;letter-spacing:0.05px;-webkit-text-stroke:0.12px #3c3c3c">188: Command Timeout</div>
<div class="a" style="left:657.3px;top:333.24px;font-size:10px;line-height:13px;color:#333;word-spacing:1px;-webkit-text-stroke:0.12px #333">100 #</div>
<div class="ln" style="left:652px;top:349px;width:148px"></div>
<div class="a" style="left:811px;top:291.13px;font-size:10.3px;line-height:13px;color:#3c3c3c;letter-spacing:0.05px;-webkit-text-stroke:0.12px #3c3c3c">189: High Fly Writes</div>
<div class="a" style="left:811.3px;top:333.24px;font-size:10px;line-height:13px;color:#333;word-spacing:1px;-webkit-text-stroke:0.12px #333">100 #</div>
<div class="ln" style="left:806px;top:349px;width:148px"></div>
<div class="a" style="left:42px;top:364.13px;font-size:10.3px;line-height:13px;color:#3c3c3c;letter-spacing:0.05px;-webkit-text-stroke:0.12px #3c3c3c">190: Airflow Temperat<span style="letter-spacing:-0.5px">...</span></div>
<div class="a" style="left:42.3px;top:406.24px;font-size:10px;line-height:13px;color:#333;word-spacing:1px;-webkit-text-stroke:0.12px #333">60 #</div>
<div class="ln" style="left:37px;top:422px;width:148px"></div>
<div class="a" style="left:196px;top:364.13px;font-size:10.3px;line-height:13px;color:#3c3c3c;letter-spacing:0.05px;-webkit-text-stroke:0.12px #3c3c3c">194: Temperature Cels<span style="letter-spacing:-0.5px">...</span></div>
<div class="a" style="left:196.3px;top:406.24px;font-size:10px;line-height:13px;color:#333;word-spacing:1px;-webkit-text-stroke:0.12px #333">40 #</div>
<div class="ln" style="left:191px;top:422px;width:148px"></div>
<div class="a" style="left:350px;top:364.13px;font-size:10.3px;line-height:13px;color:#3c3c3c;letter-spacing:0.05px;-webkit-text-stroke:0.12px #3c3c3c">195: Hardware ECC Re<span style="letter-spacing:-0.5px">...</span></div>
<div class="a" style="left:350.3px;top:406.24px;font-size:10px;line-height:13px;color:#333;word-spacing:1px;-webkit-text-stroke:0.12px #333">37 #</div>
<div class="ln" style="left:345px;top:422px;width:148px"></div>
<div class="a" style="left:504px;top:364.13px;font-size:10.3px;line-height:13px;color:#3c3c3c;letter-spacing:0.05px;-webkit-text-stroke:0.12px #3c3c3c">197: Current Pending S<span style="letter-spacing:-0.5px">...</span></div>
<div class="a" style="left:504.3px;top:406.24px;font-size:10px;line-height:13px;color:#333;word-spacing:1px;-webkit-text-stroke:0.12px #333">100 #</div>
<div class="ln" style="left:499px;top:422px;width:148px"></div>
<div class="a" style="left:658px;top:364.13px;font-size:10.3px;line-height:13px;color:#3c3c3c;letter-spacing:0.05px;-webkit-text-stroke:0.12px #3c3c3c">198: Uncorrectable Se<span style="letter-spacing:-0.5px">...</span></div>
<div class="a" style="left:658.3px;top:406.24px;font-size:10px;line-height:13px;color:#333;word-spacing:1px;-webkit-text-stroke:0.12px #333">100 #</div>
<div class="ln" style="left:653px;top:422px;width:148px"></div>
<div class="a" style="left:812px;top:364.13px;font-size:10.3px;line-height:13px;color:#3c3c3c;letter-spacing:0.05px;-webkit-text-stroke:0.12px #3c3c3c">199: UltraDMA CRC Err<span style="letter-spacing:-0.5px">...</span></div>
<div class="a" style="left:812.3px;top:406.24px;font-size:10px;line-height:13px;color:#333;word-spacing:1px;-webkit-text-stroke:0.12px #333">200 #</div>
<div class="ln" style="left:807px;top:422px;width:148px"></div>
<div class="a" style="left:42px;top:437.13px;font-size:10.3px;line-height:13px;color:#3c3c3c;letter-spacing:0.05px;-webkit-text-stroke:0.12px #3c3c3c">240: Transfer Error Rate</div>
<div class="a" style="left:42.3px;top:479.24px;font-size:10px;line-height:13px;color:#333;word-spacing:1px;-webkit-text-stroke:0.12px #333">100 #</div>
<div class="ln" style="left:37px;top:495px;width:148px"></div>
<div class="a" style="left:196px;top:437.13px;font-size:10.3px;line-height:13px;color:#3c3c3c;letter-spacing:0.05px;-webkit-text-stroke:0.12px #3c3c3c">241: Total LBAs Written</div>
<div class="a" style="left:196.3px;top:479.24px;font-size:10px;line-height:13px;color:#333;word-spacing:1px;-webkit-text-stroke:0.12px #333">100 #</div>
<div class="ln" style="left:191px;top:495px;width:148px"></div>
<div class="a" style="left:350px;top:437.13px;font-size:10.3px;line-height:13px;color:#3c3c3c;letter-spacing:0.05px;-webkit-text-stroke:0.12px #3c3c3c">242: Total LBAs Read</div>
<div class="a" style="left:350.3px;top:479.24px;font-size:10px;line-height:13px;color:#333;word-spacing:1px;-webkit-text-stroke:0.12px #333">100 #</div>
<div class="ln" style="left:345px;top:495px;width:148px"></div>
<div class="panel" style="left:32px;top:521px;width:972px;height:400px"></div>
<div class="a" style="left:62px;top:566.03px;font-size:12.6px;line-height:16px;color:#1e1e30">Channel</div>
<div class="a" style="left:237px;top:565.40px;font-size:13px;line-height:17px;color:#1e1e30">ID</div>
<div class="a" style="left:336.3px;top:565.40px;font-size:13px;line-height:17px;color:#1e1e30">Last Value</div>
<div class="a" style="left:556.5px;top:565.40px;font-size:13px;line-height:17px;color:#1e1e30">Minimum</div>
<div class="a" style="left:728.5px;top:565.40px;font-size:13px;line-height:17px;color:#1e1e30">Maximum</div>
<svg width="1004" height="887"><path d="M115,573.8 H122.4 L118.7,578.2 Z" fill="#1e1e30"/><path d="M258.4,568.4 L262.4,572.6999999999999 H254.4 Z M258.4,578.6999999999999 L262.4,574.4 H254.4 Z" fill="#cacaca"/><path d="M406.9,568.4 L410.9,572.6999999999999 H402.9 Z M406.9,578.6999999999999 L410.9,574.4 H402.9 Z" fill="#cacaca"/><path d="M621,568.4 L625,572.6999999999999 H617 Z M621,578.6999999999999 L625,574.4 H617 Z" fill="#cacaca"/><path d="M795.8,568.4 L799.8,572.6999999999999 H791.8 Z M795.8,578.6999999999999 L799.8,574.4 H791.8 Z" fill="#cacaca"/></svg>
<div class="rl" style="top:584px"></div>
<div class="a" style="left:62px;top:595.63px;font-size:12.6px;line-height:16px;color:#555555">001: Read Error Rate</div>
<div class="a" style="left:237.5px;top:595.00px;font-size:13px;line-height:17px;color:#555555">2</div>
<div class="a" style="left:325px;top:595.00px;font-size:13px;line-height:17px;color:#555555;width:100px;text-align:center">119 #</div>
<div class="a" style="left:527px;top:595.00px;font-size:13px;line-height:17px;color:#555555;width:100px;text-align:right">119 #</div>
<div class="a" style="left:702px;top:595.00px;font-size:13px;line-height:17px;color:#555555;width:100px;text-align:right">119 #</div>
<div class="rl" style="top:614px"></div>
<div class="a" style="left:62px;top:625.63px;font-size:12.6px;line-height:16px;color:#555555">003: Spin-Up Time</div>
<div class="a" style="left:237.5px;top:625.00px;font-size:13px;line-height:17px;color:#555555">3</div>
<div class="a" style="left:325px;top:625.00px;font-size:13px;line-height:17px;color:#555555;width:100px;text-align:center">98 #</div>
<div class="a" style="left:527px;top:625.00px;font-size:13px;line-height:17px;color:#555555;width:100px;text-align:right">98 #</div>
<div class="a" style="left:702px;top:625.00px;font-size:13px;line-height:17px;color:#555555;width:100px;text-align:right">98 #</div>
<div class="rl" style="top:644px"></div>
<div class="a" style="left:62px;top:655.63px;font-size:12.6px;line-height:16px;color:#555555">004: Start/Stop Count</div>
<div class="a" style="left:237.5px;top:655.00px;font-size:13px;line-height:17px;color:#555555">4</div>
<div class="a" style="left:325px;top:655.00px;font-size:13px;line-height:17px;color:#555555;width:100px;text-align:center">83 #</div>
<div class="a" style="left:527px;top:655.00px;font-size:13px;line-height:17px;color:#555555;width:100px;text-align:right">83 #</div>
<div class="a" style="left:702px;top:655.00px;font-size:13px;line-height:17px;color:#555555;width:100px;text-align:right">83 #</div>
<div class="rl" style="top:674px"></div>
<div class="a" style="left:62px;top:685.63px;font-size:12.6px;line-height:16px;color:#555555">005: Reallocated Sectors…</div>
<div class="a" style="left:237.5px;top:685.00px;font-size:13px;line-height:17px;color:#555555">5</div>
<div class="a" style="left:325px;top:685.00px;font-size:13px;line-height:17px;color:#555555;width:100px;text-align:center">100 #</div>
<div class="a" style="left:527px;top:685.00px;font-size:13px;line-height:17px;color:#555555;width:100px;text-align:right">100 #</div>
<div class="a" style="left:702px;top:685.00px;font-size:13px;line-height:17px;color:#555555;width:100px;text-align:right">100 #</div>
<div class="rl" style="top:704px"></div>
<div class="a" style="left:62px;top:715.63px;font-size:12.6px;line-height:16px;color:#555555">007: Seek Error Rate</div>
<div class="a" style="left:237.5px;top:715.00px;font-size:13px;line-height:17px;color:#555555">6</div>
<div class="a" style="left:325px;top:715.00px;font-size:13px;line-height:17px;color:#555555;width:100px;text-align:center">80 #</div>
<div class="a" style="left:527px;top:715.00px;font-size:13px;line-height:17px;color:#555555;width:100px;text-align:right">80 #</div>
<div class="a" style="left:702px;top:715.00px;font-size:13px;line-height:17px;color:#555555;width:100px;text-align:right">80 #</div>
<div class="rl" style="top:734px"></div>
<div class="a" style="left:62px;top:745.63px;font-size:12.6px;line-height:16px;color:#555555">009: Power-On Hours</div>
<div class="a" style="left:237.5px;top:745.00px;font-size:13px;line-height:17px;color:#555555">7</div>
<div class="a" style="left:325px;top:745.00px;font-size:13px;line-height:17px;color:#555555;width:100px;text-align:center">84 #</div>
<div class="a" style="left:527px;top:745.00px;font-size:13px;line-height:17px;color:#555555;width:100px;text-align:right">84 #</div>
<div class="a" style="left:702px;top:745.00px;font-size:13px;line-height:17px;color:#555555;width:100px;text-align:right">84 #</div>
<div class="rl" style="top:764px"></div>
<div class="a" style="left:62px;top:775.63px;font-size:12.6px;line-height:16px;color:#555555">010: Spin Retry Count</div>
<div class="a" style="left:237.5px;top:775.00px;font-size:13px;line-height:17px;color:#555555">8</div>
<div class="a" style="left:325px;top:775.00px;font-size:13px;line-height:17px;color:#555555;width:100px;text-align:center">100 #</div>
<div class="a" style="left:527px;top:775.00px;font-size:13px;line-height:17px;color:#555555;width:100px;text-align:right">100 #</div>
<div class="a" style="left:702px;top:775.00px;font-size:13px;line-height:17px;color:#555555;width:100px;text-align:right">100 #</div>
<div class="rl" style="top:794px"></div>
<div class="a" style="left:62px;top:805.63px;font-size:12.6px;line-height:16px;color:#555555">012: Power Cycle Count</div>
<div class="a" style="left:237.5px;top:805.00px;font-size:13px;line-height:17px;color:#555555">9</div>
<div class="a" style="left:325px;top:805.00px;font-size:13px;line-height:17px;color:#555555;width:100px;text-align:center">92 #</div>
<div class="a" style="left:527px;top:805.00px;font-size:13px;line-height:17px;color:#555555;width:100px;text-align:right">92 #</div>
<div class="a" style="left:702px;top:805.00px;font-size:13px;line-height:17px;color:#555555;width:100px;text-align:right">92 #</div>
<div class="rl" style="top:824px"></div>
<div class="a" style="left:62px;top:835.63px;font-size:12.6px;line-height:16px;color:#555555">183: SATA Downshift Err…</div>
<div class="a" style="left:237.5px;top:835.00px;font-size:13px;line-height:17px;color:#555555">10</div>
<div class="a" style="left:325px;top:835.00px;font-size:13px;line-height:17px;color:#555555;width:100px;text-align:center">100 #</div>
<div class="a" style="left:527px;top:835.00px;font-size:13px;line-height:17px;color:#555555;width:100px;text-align:right">100 #</div>
<div class="a" style="left:702px;top:835.00px;font-size:13px;line-height:17px;color:#555555;width:100px;text-align:right">100 #</div>
<div class="rl" style="top:854px"></div>
<div class="a" style="left:62px;top:865.63px;font-size:12.6px;line-height:16px;color:#555555">184: End-to-End error / IO…</div>
<div class="a" style="left:237.5px;top:865.00px;font-size:13px;line-height:17px;color:#555555">11</div>
<div class="a" style="left:325px;top:865.00px;font-size:13px;line-height:17px;color:#555555;width:100px;text-align:center">100 #</div>
<div class="a" style="left:527px;top:865.00px;font-size:13px;line-height:17px;color:#555555;width:100px;text-align:right">100 #</div>
<div class="a" style="left:702px;top:865.00px;font-size:13px;line-height:17px;color:#555555;width:100px;text-align:right">100 #</div>
<div class="rl" style="top:884px"></div>
<svg width="1004" height="887"><circle cx="900.6" cy="600" r="4.0" fill="#3d3d3d"/><rect x="899.80" y="595.30" width="1.60" height="4.70" fill="#3d3d3d" transform="rotate(0.0 900.6 600)"/><rect x="899.80" y="595.30" width="1.60" height="4.70" fill="#3d3d3d" transform="rotate(40.0 900.6 600)"/><rect x="899.80" y="595.30" width="1.60" height="4.70" fill="#3d3d3d" transform="rotate(80.0 900.6 600)"/><rect x="899.80" y="595.30" width="1.60" height="4.70" fill="#3d3d3d" transform="rotate(120.0 900.6 600)"/><rect x="899.80" y="595.30" width="1.60" height="4.70" fill="#3d3d3d" transform="rotate(160.0 900.6 600)"/><rect x="899.80" y="595.30" width="1.60" height="4.70" fill="#3d3d3d" transform="rotate(200.0 900.6 600)"/><rect x="899.80" y="595.30" width="1.60" height="4.70" fill="#3d3d3d" transform="rotate(240.0 900.6 600)"/><rect x="899.80" y="595.30" width="1.60" height="4.70" fill="#3d3d3d" transform="rotate(280.0 900.6 600)"/><rect x="899.80" y="595.30" width="1.60" height="4.70" fill="#3d3d3d" transform="rotate(320.0 900.6 600)"/><circle cx="900.6" cy="600" r="2.0" fill="#fff"/><circle cx="895.0" cy="605.8" r="2.4" fill="#3d3d3d"/><rect x="894.45" y="602.90" width="1.10" height="2.90" fill="#3d3d3d" transform="rotate(0.0 895.0 605.8)"/><rect x="894.45" y="602.90" width="1.10" height="2.90" fill="#3d3d3d" transform="rotate(51.4 895.0 605.8)"/><rect x="894.45" y="602.90" width="1.10" height="2.90" fill="#3d3d3d" transform="rotate(102.9 895.0 605.8)"/><rect x="894.45" y="602.90" width="1.10" height="2.90" fill="#3d3d3d" transform="rotate(154.3 895.0 605.8)"/><rect x="894.45" y="602.90" width="1.10" height="2.90" fill="#3d3d3d" transform="rotate(205.7 895.0 605.8)"/><rect x="894.45" y="602.90" width="1.10" height="2.90" fill="#3d3d3d" transform="rotate(257.1 895.0 605.8)"/><rect x="894.45" y="602.90" width="1.10" height="2.90" fill="#3d3d3d" transform="rotate(308.6 895.0 605.8)"/><circle cx="895.0" cy="605.8" r="1.0" fill="#fff"/><circle cx="900.6" cy="630" r="4.0" fill="#3d3d3d"/><rect x="899.80" y="625.30" width="1.60" height="4.70" fill="#3d3d3d" transform="rotate(0.0 900.6 630)"/><rect x="899.80" y="625.30" width="1.60" height="4.70" fill="#3d3d3d" transform="rotate(40.0 900.6 630)"/><rect x="899.80" y="625.30" width="1.60" height="4.70" fill="#3d3d3d" transform="rotate(80.0 900.6 630)"/><rect x="899.80" y="625.30" width="1.60" height="4.70" fill="#3d3d3d" transform="rotate(120.0 900.6 630)"/><rect x="899.80" y="625.30" width="1.60" height="4.70" fill="#3d3d3d" transform="rotate(160.0 900.6 630)"/><rect x="899.80" y="625.30" width="1.60" height="4.70" fill="#3d3d3d" transform="rotate(200.0 900.6 630)"/><rect x="899.80" y="625.30" width="1.60" height="4.70" fill="#3d3d3d" transform="rotate(240.0 900.6 630)"/><rect x="899.80" y="625.30" width="1.60" height="4.70" fill="#3d3d3d" transform="rotate(280.0 900.6 630)"/><rect x="899.80" y="625.30" width="1.60" height="4.70" fill="#3d3d3d" transform="rotate(320.0 900.6 630)"/><circle cx="900.6" cy="630" r="2.0" fill="#fff"/><circle cx="895.0" cy="635.8" r="2.4" fill="#3d3d3d"/><rect x="894.45" y="632.90" width="1.10" height="2.90" fill="#3d3d3d" transform="rotate(0.0 895.0 635.8)"/><rect x="894.45" y="632.90" width="1.10" height="2.90" fill="#3d3d3d" transform="rotate(51.4 895.0 635.8)"/><rect x="894.45" y="632.90" width="1.10" height="2.90" fill="#3d3d3d" transform="rotate(102.9 895.0 635.8)"/><rect x="894.45" y="632.90" width="1.10" height="2.90" fill="#3d3d3d" transform="rotate(154.3 895.0 635.8)"/><rect x="894.45" y="632.90" width="1.10" height="2.90" fill="#3d3d3d" transform="rotate(205.7 895.0 635.8)"/><rect x="894.45" y="632.90" width="1.10" height="2.90" fill="#3d3d3d" transform="rotate(257.1 895.0 635.8)"/><rect x="894.45" y="632.90" width="1.10" height="2.90" fill="#3d3d3d" transform="rotate(308.6 895.0 635.8)"/><circle cx="895.0" cy="635.8" r="1.0" fill="#fff"/><circle cx="900.6" cy="660" r="4.0" fill="#3d3d3d"/><rect x="899.80" y="655.30" width="1.60" height="4.70" fill="#3d3d3d" transform="rotate(0.0 900.6 660)"/><rect x="899.80" y="655.30" width="1.60" height="4.70" fill="#3d3d3d" transform="rotate(40.0 900.6 660)"/><rect x="899.80" y="655.30" width="1.60" height="4.70" fill="#3d3d3d" transform="rotate(80.0 900.6 660)"/><rect x="899.80" y="655.30" width="1.60" height="4.70" fill="#3d3d3d" transform="rotate(120.0 900.6 660)"/><rect x="899.80" y="655.30" width="1.60" height="4.70" fill="#3d3d3d" transform="rotate(160.0 900.6 660)"/><rect x="899.80" y="655.30" width="1.60" height="4.70" fill="#3d3d3d" transform="rotate(200.0 900.6 660)"/><rect x="899.80" y="655.30" width="1.60" height="4.70" fill="#3d3d3d" transform="rotate(240.0 900.6 660)"/><rect x="899.80" y="655.30" width="1.60" height="4.70" fill="#3d3d3d" transform="rotate(280.0 900.6 660)"/><rect x="899.80" y="655.30" width="1.60" height="4.70" fill="#3d3d3d" transform="rotate(320.0 900.6 660)"/><circle cx="900.6" cy="660" r="2.0" fill="#fff"/><circle cx="895.0" cy="665.8" r="2.4" fill="#3d3d3d"/><rect x="894.45" y="662.90" width="1.10" height="2.90" fill="#3d3d3d" transform="rotate(0.0 895.0 665.8)"/><rect x="894.45" y="662.90" width="1.10" height="2.90" fill="#3d3d3d" transform="rotate(51.4 895.0 665.8)"/><rect x="894.45" y="662.90" width="1.10" height="2.90" fill="#3d3d3d" transform="rotate(102.9 895.0 665.8)"/><rect x="894.45" y="662.90" width="1.10" height="2.90" fill="#3d3d3d" transform="rotate(154.3 895.0 665.8)"/><rect x="894.45" y="662.90" width="1.10" height="2.90" fill="#3d3d3d" transform="rotate(205.7 895.0 665.8)"/><rect x="894.45" y="662.90" width="1.10" height="2.90" fill="#3d3d3d" transform="rotate(257.1 895.0 665.8)"/><rect x="894.45" y="662.90" width="1.10" height="2.90" fill="#3d3d3d" transform="rotate(308.6 895.0 665.8)"/><circle cx="895.0" cy="665.8" r="1.0" fill="#fff"/><circle cx="900.6" cy="690" r="4.0" fill="#3d3d3d"/><rect x="899.80" y="685.30" width="1.60" height="4.70" fill="#3d3d3d" transform="rotate(0.0 900.6 690)"/><rect x="899.80" y="685.30" width="1.60" height="4.70" fill="#3d3d3d" transform="rotate(40.0 900.6 690)"/><rect x="899.80" y="685.30" width="1.60" height="4.70" fill="#3d3d3d" transform="rotate(80.0 900.6 690)"/><rect x="899.80" y="685.30" width="1.60" height="4.70" fill="#3d3d3d" transform="rotate(120.0 900.6 690)"/><rect x="899.80" y="685.30" width="1.60" height="4.70" fill="#3d3d3d" transform="rotate(160.0 900.6 690)"/><rect x="899.80" y="685.30" width="1.60" height="4.70" fill="#3d3d3d" transform="rotate(200.0 900.6 690)"/><rect x="899.80" y="685.30" width="1.60" height="4.70" fill="#3d3d3d" transform="rotate(240.0 900.6 690)"/><rect x="899.80" y="685.30" width="1.60" height="4.70" fill="#3d3d3d" transform="rotate(280.0 900.6 690)"/><rect x="899.80" y="685.30" width="1.60" height="4.70" fill="#3d3d3d" transform="rotate(320.0 900.6 690)"/><circle cx="900.6" cy="690" r="2.0" fill="#fff"/><circle cx="895.0" cy="695.8" r="2.4" fill="#3d3d3d"/><rect x="894.45" y="692.90" width="1.10" height="2.90" fill="#3d3d3d" transform="rotate(0.0 895.0 695.8)"/><rect x="894.45" y="692.90" width="1.10" height="2.90" fill="#3d3d3d" transform="rotate(51.4 895.0 695.8)"/><rect x="894.45" y="692.90" width="1.10" height="2.90" fill="#3d3d3d" transform="rotate(102.9 895.0 695.8)"/><rect x="894.45" y="692.90" width="1.10" height="2.90" fill="#3d3d3d" transform="rotate(154.3 895.0 695.8)"/><rect x="894.45" y="692.90" width="1.10" height="2.90" fill="#3d3d3d" transform="rotate(205.7 895.0 695.8)"/><rect x="894.45" y="692.90" width="1.10" height="2.90" fill="#3d3d3d" transform="rotate(257.1 895.0 695.8)"/><rect x="894.45" y="692.90" width="1.10" height="2.90" fill="#3d3d3d" transform="rotate(308.6 895.0 695.8)"/><circle cx="895.0" cy="695.8" r="1.0" fill="#fff"/><circle cx="900.6" cy="720" r="4.0" fill="#3d3d3d"/><rect x="899.80" y="715.30" width="1.60" height="4.70" fill="#3d3d3d" transform="rotate(0.0 900.6 720)"/><rect x="899.80" y="715.30" width="1.60" height="4.70" fill="#3d3d3d" transform="rotate(40.0 900.6 720)"/><rect x="899.80" y="715.30" width="1.60" height="4.70" fill="#3d3d3d" transform="rotate(80.0 900.6 720)"/><rect x="899.80" y="715.30" width="1.60" height="4.70" fill="#3d3d3d" transform="rotate(120.0 900.6 720)"/><rect x="899.80" y="715.30" width="1.60" height="4.70" fill="#3d3d3d" transform="rotate(160.0 900.6 720)"/><rect x="899.80" y="715.30" width="1.60" height="4.70" fill="#3d3d3d" transform="rotate(200.0 900.6 720)"/><rect x="899.80" y="715.30" width="1.60" height="4.70" fill="#3d3d3d" transform="rotate(240.0 900.6 720)"/><rect x="899.80" y="715.30" width="1.60" height="4.70" fill="#3d3d3d" transform="rotate(280.0 900.6 720)"/><rect x="899.80" y="715.30" width="1.60" height="4.70" fill="#3d3d3d" transform="rotate(320.0 900.6 720)"/><circle cx="900.6" cy="720" r="2.0" fill="#fff"/><circle cx="895.0" cy="725.8" r="2.4" fill="#3d3d3d"/><rect x="894.45" y="722.90" width="1.10" height="2.90" fill="#3d3d3d" transform="rotate(0.0 895.0 725.8)"/><rect x="894.45" y="722.90" width="1.10" height="2.90" fill="#3d3d3d" transform="rotate(51.4 895.0 725.8)"/><rect x="894.45" y="722.90" width="1.10" height="2.90" fill="#3d3d3d" transform="rotate(102.9 895.0 725.8)"/><rect x="894.45" y="722.90" width="1.10" height="2.90" fill="#3d3d3d" transform="rotate(154.3 895.0 725.8)"/><rect x="894.45" y="722.90" width="1.10" height="2.90" fill="#3d3d3d" transform="rotate(205.7 895.0 725.8)"/><rect x="894.45" y="722.90" width="1.10" height="2.90" fill="#3d3d3d" transform="rotate(257.1 895.0 725.8)"/><rect x="894.45" y="722.90" width="1.10" height="2.90" fill="#3d3d3d" transform="rotate(308.6 895.0 725.8)"/><circle cx="895.0" cy="725.8" r="1.0" fill="#fff"/><circle cx="900.6" cy="750" r="4.0" fill="#3d3d3d"/><rect x="899.80" y="745.30" width="1.60" height="4.70" fill="#3d3d3d" transform="rotate(0.0 900.6 750)"/><rect x="899.80" y="745.30" width="1.60" height="4.70" fill="#3d3d3d" transform="rotate(40.0 900.6 750)"/><rect x="899.80" y="745.30" width="1.60" height="4.70" fill="#3d3d3d" transform="rotate(80.0 900.6 750)"/><rect x="899.80" y="745.30" width="1.60" height="4.70" fill="#3d3d3d" transform="rotate(120.0 900.6 750)"/><rect x="899.80" y="745.30" width="1.60" height="4.70" fill="#3d3d3d" transform="rotate(160.0 900.6 750)"/><rect x="899.80" y="745.30" width="1.60" height="4.70" fill="#3d3d3d" transform="rotate(200.0 900.6 750)"/><rect x="899.80" y="745.30" width="1.60" height="4.70" fill="#3d3d3d" transform="rotate(240.0 900.6 750)"/><rect x="899.80" y="745.30" width="1.60" height="4.70" fill="#3d3d3d" transform="rotate(280.0 900.6 750)"/><rect x="899.80" y="745.30" width="1.60" height="4.70" fill="#3d3d3d" transform="rotate(320.0 900.6 750)"/><circle cx="900.6" cy="750" r="2.0" fill="#fff"/><circle cx="895.0" cy="755.8" r="2.4" fill="#3d3d3d"/><rect x="894.45" y="752.90" width="1.10" height="2.90" fill="#3d3d3d" transform="rotate(0.0 895.0 755.8)"/><rect x="894.45" y="752.90" width="1.10" height="2.90" fill="#3d3d3d" transform="rotate(51.4 895.0 755.8)"/><rect x="894.45" y="752.90" width="1.10" height="2.90" fill="#3d3d3d" transform="rotate(102.9 895.0 755.8)"/><rect x="894.45" y="752.90" width="1.10" height="2.90" fill="#3d3d3d" transform="rotate(154.3 895.0 755.8)"/><rect x="894.45" y="752.90" width="1.10" height="2.90" fill="#3d3d3d" transform="rotate(205.7 895.0 755.8)"/><rect x="894.45" y="752.90" width="1.10" height="2.90" fill="#3d3d3d" transform="rotate(257.1 895.0 755.8)"/><rect x="894.45" y="752.90" width="1.10" height="2.90" fill="#3d3d3d" transform="rotate(308.6 895.0 755.8)"/><circle cx="895.0" cy="755.8" r="1.0" fill="#fff"/><circle cx="900.6" cy="780" r="4.0" fill="#3d3d3d"/><rect x="899.80" y="775.30" width="1.60" height="4.70" fill="#3d3d3d" transform="rotate(0.0 900.6 780)"/><rect x="899.80" y="775.30" width="1.60" height="4.70" fill="#3d3d3d" transform="rotate(40.0 900.6 780)"/><rect x="899.80" y="775.30" width="1.60" height="4.70" fill="#3d3d3d" transform="rotate(80.0 900.6 780)"/><rect x="899.80" y="775.30" width="1.60" height="4.70" fill="#3d3d3d" transform="rotate(120.0 900.6 780)"/><rect x="899.80" y="775.30" width="1.60" height="4.70" fill="#3d3d3d" transform="rotate(160.0 900.6 780)"/><rect x="899.80" y="775.30" width="1.60" height="4.70" fill="#3d3d3d" transform="rotate(200.0 900.6 780)"/><rect x="899.80" y="775.30" width="1.60" height="4.70" fill="#3d3d3d" transform="rotate(240.0 900.6 780)"/><rect x="899.80" y="775.30" width="1.60" height="4.70" fill="#3d3d3d" transform="rotate(280.0 900.6 780)"/><rect x="899.80" y="775.30" width="1.60" height="4.70" fill="#3d3d3d" transform="rotate(320.0 900.6 780)"/><circle cx="900.6" cy="780" r="2.0" fill="#fff"/><circle cx="895.0" cy="785.8" r="2.4" fill="#3d3d3d"/><rect x="894.45" y="782.90" width="1.10" height="2.90" fill="#3d3d3d" transform="rotate(0.0 895.0 785.8)"/><rect x="894.45" y="782.90" width="1.10" height="2.90" fill="#3d3d3d" transform="rotate(51.4 895.0 785.8)"/><rect x="894.45" y="782.90" width="1.10" height="2.90" fill="#3d3d3d" transform="rotate(102.9 895.0 785.8)"/><rect x="894.45" y="782.90" width="1.10" height="2.90" fill="#3d3d3d" transform="rotate(154.3 895.0 785.8)"/><rect x="894.45" y="782.90" width="1.10" height="2.90" fill="#3d3d3d" transform="rotate(205.7 895.0 785.8)"/><rect x="894.45" y="782.90" width="1.10" height="2.90" fill="#3d3d3d" transform="rotate(257.1 895.0 785.8)"/><rect x="894.45" y="782.90" width="1.10" height="2.90" fill="#3d3d3d" transform="rotate(308.6 895.0 785.8)"/><circle cx="895.0" cy="785.8" r="1.0" fill="#fff"/><circle cx="900.6" cy="810" r="4.0" fill="#3d3d3d"/><rect x="899.80" y="805.30" width="1.60" height="4.70" fill="#3d3d3d" transform="rotate(0.0 900.6 810)"/><rect x="899.80" y="805.30" width="1.60" height="4.70" fill="#3d3d3d" transform="rotate(40.0 900.6 810)"/><rect x="899.80" y="805.30" width="1.60" height="4.70" fill="#3d3d3d" transform="rotate(80.0 900.6 810)"/><rect x="899.80" y="805.30" width="1.60" height="4.70" fill="#3d3d3d" transform="rotate(120.0 900.6 810)"/><rect x="899.80" y="805.30" width="1.60" height="4.70" fill="#3d3d3d" transform="rotate(160.0 900.6 810)"/><rect x="899.80" y="805.30" width="1.60" height="4.70" fill="#3d3d3d" transform="rotate(200.0 900.6 810)"/><rect x="899.80" y="805.30" width="1.60" height="4.70" fill="#3d3d3d" transform="rotate(240.0 900.6 810)"/><rect x="899.80" y="805.30" width="1.60" height="4.70" fill="#3d3d3d" transform="rotate(280.0 900.6 810)"/><rect x="899.80" y="805.30" width="1.60" height="4.70" fill="#3d3d3d" transform="rotate(320.0 900.6 810)"/><circle cx="900.6" cy="810" r="2.0" fill="#fff"/><circle cx="895.0" cy="815.8" r="2.4" fill="#3d3d3d"/><rect x="894.45" y="812.90" width="1.10" height="2.90" fill="#3d3d3d" transform="rotate(0.0 895.0 815.8)"/><rect x="894.45" y="812.90" width="1.10" height="2.90" fill="#3d3d3d" transform="rotate(51.4 895.0 815.8)"/><rect x="894.45" y="812.90" width="1.10" height="2.90" fill="#3d3d3d" transform="rotate(102.9 895.0 815.8)"/><rect x="894.45" y="812.90" width="1.10" height="2.90" fill="#3d3d3d" transform="rotate(154.3 895.0 815.8)"/><rect x="894.45" y="812.90" width="1.10" height="2.90" fill="#3d3d3d" transform="rotate(205.7 895.0 815.8)"/><rect x="894.45" y="812.90" width="1.10" height="2.90" fill="#3d3d3d" transform="rotate(257.1 895.0 815.8)"/><rect x="894.45" y="812.90" width="1.10" height="2.90" fill="#3d3d3d" transform="rotate(308.6 895.0 815.8)"/><circle cx="895.0" cy="815.8" r="1.0" fill="#fff"/><circle cx="900.6" cy="840" r="4.0" fill="#3d3d3d"/><rect x="899.80" y="835.30" width="1.60" height="4.70" fill="#3d3d3d" transform="rotate(0.0 900.6 840)"/><rect x="899.80" y="835.30" width="1.60" height="4.70" fill="#3d3d3d" transform="rotate(40.0 900.6 840)"/><rect x="899.80" y="835.30" width="1.60" height="4.70" fill="#3d3d3d" transform="rotate(80.0 900.6 840)"/><rect x="899.80" y="835.30" width="1.60" height="4.70" fill="#3d3d3d" transform="rotate(120.0 900.6 840)"/><rect x="899.80" y="835.30" width="1.60" height="4.70" fill="#3d3d3d" transform="rotate(160.0 900.6 840)"/><rect x="899.80" y="835.30" width="1.60" height="4.70" fill="#3d3d3d" transform="rotate(200.0 900.6 840)"/><rect x="899.80" y="835.30" width="1.60" height="4.70" fill="#3d3d3d" transform="rotate(240.0 900.6 840)"/><rect x="899.80" y="835.30" width="1.60" height="4.70" fill="#3d3d3d" transform="rotate(280.0 900.6 840)"/><rect x="899.80" y="835.30" width="1.60" height="4.70" fill="#3d3d3d" transform="rotate(320.0 900.6 840)"/><circle cx="900.6" cy="840" r="2.0" fill="#fff"/><circle cx="895.0" cy="845.8" r="2.4" fill="#3d3d3d"/><rect x="894.45" y="842.90" width="1.10" height="2.90" fill="#3d3d3d" transform="rotate(0.0 895.0 845.8)"/><rect x="894.45" y="842.90" width="1.10" height="2.90" fill="#3d3d3d" transform="rotate(51.4 895.0 845.8)"/><rect x="894.45" y="842.90" width="1.10" height="2.90" fill="#3d3d3d" transform="rotate(102.9 895.0 845.8)"/><rect x="894.45" y="842.90" width="1.10" height="2.90" fill="#3d3d3d" transform="rotate(154.3 895.0 845.8)"/><rect x="894.45" y="842.90" width="1.10" height="2.90" fill="#3d3d3d" transform="rotate(205.7 895.0 845.8)"/><rect x="894.45" y="842.90" width="1.10" height="2.90" fill="#3d3d3d" transform="rotate(257.1 895.0 845.8)"/><rect x="894.45" y="842.90" width="1.10" height="2.90" fill="#3d3d3d" transform="rotate(308.6 895.0 845.8)"/><circle cx="895.0" cy="845.8" r="1.0" fill="#fff"/><circle cx="900.6" cy="870" r="4.0" fill="#3d3d3d"/><rect x="899.80" y="865.30" width="1.60" height="4.70" fill="#3d3d3d" transform="rotate(0.0 900.6 870)"/><rect x="899.80" y="865.30" width="1.60" height="4.70" fill="#3d3d3d" transform="rotate(40.0 900.6 870)"/><rect x="899.80" y="865.30" width="1.60" height="4.70" fill="#3d3d3d" transform="rotate(80.0 900.6 870)"/><rect x="899.80" y="865.30" width="1.60" height="4.70" fill="#3d3d3d" transform="rotate(120.0 900.6 870)"/><rect x="899.80" y="865.30" width="1.60" height="4.70" fill="#3d3d3d" transform="rotate(160.0 900.6 870)"/><rect x="899.80" y="865.30" width="1.60" height="4.70" fill="#3d3d3d" transform="rotate(200.0 900.6 870)"/><rect x="899.80" y="865.30" width="1.60" height="4.70" fill="#3d3d3d" transform="rotate(240.0 900.6 870)"/><rect x="899.80" y="865.30" width="1.60" height="4.70" fill="#3d3d3d" transform="rotate(280.0 900.6 870)"/><rect x="899.80" y="865.30" width="1.60" height="4.70" fill="#3d3d3d" transform="rotate(320.0 900.6 870)"/><circle cx="900.6" cy="870" r="2.0" fill="#fff"/><circle cx="895.0" cy="875.8" r="2.4" fill="#3d3d3d"/><rect x="894.45" y="872.90" width="1.10" height="2.90" fill="#3d3d3d" transform="rotate(0.0 895.0 875.8)"/><rect x="894.45" y="872.90" width="1.10" height="2.90" fill="#3d3d3d" transform="rotate(51.4 895.0 875.8)"/><rect x="894.45" y="872.90" width="1.10" height="2.90" fill="#3d3d3d" transform="rotate(102.9 895.0 875.8)"/><rect x="894.45" y="872.90" width="1.10" height="2.90" fill="#3d3d3d" transform="rotate(154.3 895.0 875.8)"/><rect x="894.45" y="872.90" width="1.10" height="2.90" fill="#3d3d3d" transform="rotate(205.7 895.0 875.8)"/><rect x="894.45" y="872.90" width="1.10" height="2.90" fill="#3d3d3d" transform="rotate(257.1 895.0 875.8)"/><rect x="894.45" y="872.90" width="1.10" height="2.90" fill="#3d3d3d" transform="rotate(308.6 895.0 875.8)"/><circle cx="895.0" cy="875.8" r="1.0" fill="#fff"/></svg>
<div class="a" style="left:0;top:0;width:1px;height:887px;background:rgba(95,95,95,.4)"></div>
<div class="a" style="left:1002px;top:0;width:2px;height:887px;background:rgba(110,110,110,.45)"></div>
<div class="a" style="left:0;top:885px;width:1004px;height:2px;background:rgba(110,110,110,.45)"></div>
</body></html>
